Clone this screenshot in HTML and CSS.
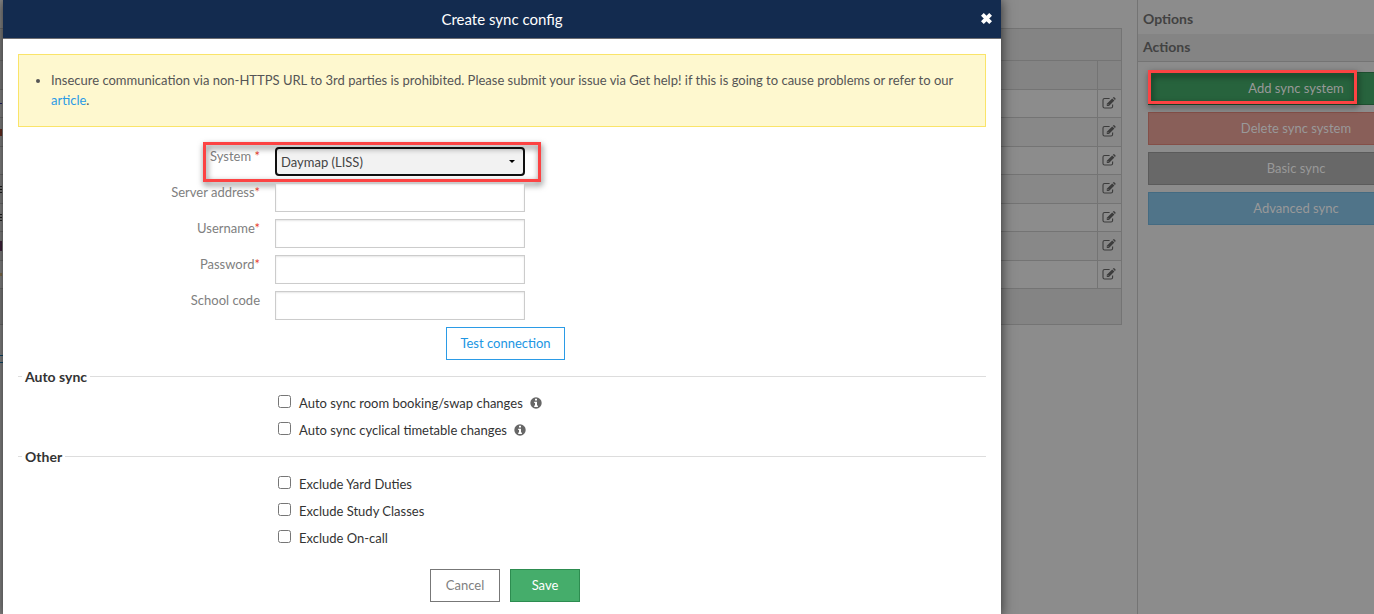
FILE: index.html
```html
<!DOCTYPE html>
<html lang="en">
<head>
<meta charset="utf-8">
<title>Create sync config</title>
<link rel="stylesheet" href="styles.css">
</head>
<body>
<svg class="symbols" aria-hidden="true">
  <symbol id="edit" viewBox="0 0 14 12">
    <path d="M7.600 1.500H2.600Q1 1.500 1 3.100V9.400Q1 11 2.600 11H9Q10.600 11 10.600 9.400V7.600" fill="none" stroke="currentColor" stroke-width="1.100"/>
    <path d="M4.800 8.900V6.700L10.200 1.400L12.400 3.600L7 8.900ZM10.800 .8L11.500 .2Q11.900-.1 12.300 .3L13.500 1.500Q13.900 1.900 13.500 2.300L12.900 2.900Z" fill="currentColor"/>
    <path d="M5.700 7.200L6.600 8.100" stroke="#8c8c8c" stroke-width=".8"/>
  </symbol>
  <symbol id="info" viewBox="0 0 12 12">
    <circle cx="6" cy="6" r="5.700" fill="currentColor"/>
    <path d="M5 1.800H7V3.500H5ZM4.200 4.700H7V8.500H7.900V9.900H4.200V8.500H5V6H4.200Z" fill="#fff"/>
  </symbol>
</svg>
<div class="page">
  <main class="content">
    <table class="systems">
      <thead>
        <tr class="caption-row"><th colspan="2"></th></tr>
        <tr><th></th><th class="tool"></th></tr>
      </thead>
      <tbody>
        <tr><td><i class="mark blue"></i></td><td class="tool"><button aria-label="Edit"><svg><use href="#edit"/></svg></button></td></tr>
        <tr><td><i class="mark red"></i></td><td class="tool"><button aria-label="Edit"><svg><use href="#edit"/></svg></button></td></tr>
        <tr><td></td><td class="tool"><button aria-label="Edit"><svg><use href="#edit"/></svg></button></td></tr>
        <tr><td><i class="mark lines"></i></td><td class="tool"><button aria-label="Edit"><svg><use href="#edit"/></svg></button></td></tr>
        <tr><td><i class="mark lines"></i></td><td class="tool"><button aria-label="Edit"><svg><use href="#edit"/></svg></button></td></tr>
        <tr><td><i class="mark purple"></i></td><td class="tool"><button aria-label="Edit"><svg><use href="#edit"/></svg></button></td></tr>
        <tr><td><i class="mark tan"></i></td><td class="tool"><button aria-label="Edit"><svg><use href="#edit"/></svg></button></td></tr>
      </tbody>
      <tfoot><tr><td colspan="2"></td></tr></tfoot>
    </table>
    <div class="edge-button"></div>
  </main>
  <aside class="options">
    <h2>Options</h2>
    <h3>Actions</h3>
    <div class="actions">
      <button class="act add">Add sync system</button>
      <button class="act delete">Delete sync system</button>
      <button class="act basic">Basic sync</button>
      <button class="act advanced">Advanced sync</button>
      <span class="callout callout-add"></span>
    </div>
  </aside>
</div>

<section class="modal" role="dialog" aria-labelledby="title">
  <header class="modal-head">
    <h1 id="title">Create sync config</h1>
    <button class="close" aria-label="Close"><svg viewBox="0 0 12 12"><path d="M2.200 2.200L9.800 9.800M9.800 2.200L2.200 9.800" stroke="#fff" stroke-width="3.600"/></svg></button>
  </header>
  <form class="modal-body">
    <ul class="alert">
      <li>Insecure communication via non-HTTPS URL to 3rd parties is prohibited. Please submit your issue via Get help! if this is going to cause problems or refer to our <a href="#">article</a>.</li>
    </ul>
    <div class="fields">
      <div class="field">
        <label for="system">System <b>*</b></label>
        <select id="system"><option>Daymap (LISS)</option></select>
        <span class="callout callout-system"></span>
      </div>
      <div class="field"><label for="server">Server address<b>*</b></label><input type="text" id="server"></div>
      <div class="field"><label for="user">Username<b>*</b></label><input type="text" id="user"></div>
      <div class="field"><label for="pass">Password<b>*</b></label><input type="password" id="pass"></div>
      <div class="field"><label for="code">School code</label><input type="text" id="code"></div>
      <div class="test"><button type="button" class="btn outline-blue">Test connection</button></div>
    </div>
    <fieldset>
      <legend>Auto sync</legend>
      <label class="check"><input type="checkbox"><span>Auto sync room booking/swap changes</span><svg><use href="#info"/></svg></label>
      <label class="check"><input type="checkbox"><span>Auto sync cyclical timetable changes</span><svg><use href="#info"/></svg></label>
    </fieldset>
    <fieldset>
      <legend>Other</legend>
      <label class="check"><input type="checkbox"><span>Exclude Yard Duties</span></label>
      <label class="check"><input type="checkbox"><span>Exclude Study Classes</span></label>
      <label class="check"><input type="checkbox"><span>Exclude On-call</span></label>
    </fieldset>
    <footer class="buttons">
      <button type="button" class="btn outline-gray">Cancel</button>
      <button type="button" class="btn save">Save</button>
    </footer>
  </form>
</section>
</body>
</html>
```

FILE: styles.css
```css
* { box-sizing: border-box; }
html, body { height: 100%; }
body {
  margin: 0;
  overflow: hidden;
  position: relative;
  background: #8c8c8c;
  color: #333;
  font: 13px/20px Lato, "Liberation Sans", sans-serif;
}
button, input, select { font: inherit; margin: 0; }
h1, h2, h3, ul { margin: 0; padding: 0; }
.symbols { display: none; }

/* Page behind the dialog */
.page { display: flex; min-height: 100%; }
.content { flex: 1; padding: 28px 15px 0 0; }
.systems { width: 100%; border-collapse: collapse; }
.systems th, .systems td { height: 28px; padding: 0; border: 1px solid #747474; border-left: 0; }
.systems tbody tr:nth-child(even) td, .systems thead tr + tr th { height: 29px; }
.systems .caption-row th { height: 32px; }
.systems th, .systems tfoot td { background: #848484; }
.systems tbody tr:nth-child(even) { background: #888; }
.systems tfoot td { height: 36px; }
.systems .tool { width: 24px; border-left: 1px solid #747474; }
.tool button { display: block; width: 100%; padding: 0 0 2px 4px; border: 0; background: none; color: #3c3c3c; }
.tool svg { display: block; width: 14px; height: 12px; overflow: visible; }
.mark { display: block; width: 2px; height: 7px; }
.blue { height: 1px; background: #22226a; }
.red { background: #6b3023; }
.lines { background: repeating-linear-gradient(#222 0 1px, #808080 1px 3px); }
.purple { height: 10px; background: #442440; }
.tan { height: 3px; background: #8b7650; }
.edge-button { width: 3px; height: 8px; margin-top: 30px; border: solid #0e4e72; border-width: 1px 0; }

.options { flex: none; width: 237px; overflow: hidden; border-left: 1px solid #747474; }
.options h2, .options h3 { padding-left: 5px; color: #424242; font-size: 14px; font-weight: 700; }
.options h2 { padding-top: 9px; padding-bottom: 5px; }
.options h3 { padding-top: 3px; padding-bottom: 4px; background: #848484; border-bottom: 1px solid #747474; }
.actions { position: relative; display: grid; gap: 7px; width: 306px; padding: 10px 0 0 10px; }
.act { height: 33px; padding: 0 0 1px; border: 1px solid; color: #999; }
.add { background: #27633d; border-color: #1e4e2f; }
.delete { background: #895f59; border-color: #844f48; }
.basic { background: #686868; border-color: #5b5b5b; }
.advanced { background: #507489; border-color: #446b82; }

/* Red highlight frames */
.callout {
  position: absolute;
  border: 3px solid #fc4343;
  filter: drop-shadow(1px 3px 3px rgba(0, 0, 0, .6));
  pointer-events: none;
}
.callout-add { left: 10px; top: 8px; width: 209px; height: 34px; }
.callout-system { left: calc(25% - 57px); top: -5px; width: 338px; height: 40px; }

/* Dialog */
.modal {
  position: absolute;
  top: 0;
  left: 3px;
  right: 373px;
  min-height: 100%;
  background: #fff;
  box-shadow: 0 0 12px rgba(0, 0, 0, .7);
}
.modal-head {
  display: grid;
  grid-template-columns: 1fr auto 1fr;
  align-items: center;
  height: 39px;
  padding: 0 8px 1px;
  background: #132b4f;
  border-bottom: 1px solid #6e6e72;
  color: #fff;
}
.modal-head h1 { grid-column: 2; font-size: 15px; line-height: 20px; font-weight: 400; }
.close { justify-self: end; padding: 0; border: 0; background: none; }
.close svg { display: block; width: 13px; height: 13px; }
.modal-body { padding: 15px; }
.alert { padding: 15px 15px 16px 32px; background: #fef8cf; border: 1px solid #fae469; color: #555; }
.alert a { color: #2b9be6; text-decoration: none; }

.fields { display: grid; gap: 7px; padding: 20px 0 7px; }
.field { position: relative; display: grid; grid-template-columns: 25% 250px; column-gap: 15px; align-items: start; }
.field label { color: #808080; line-height: 18px; text-align: right; }
.field b { color: #e83e2c; font-weight: 400; }
.field input { height: 29px; border: 1px solid #ccc; box-shadow: inset 0 1px 2px rgba(0, 0, 0, .1); }
.field select {
  height: 29px;
  padding: 0 4px;
  border: 2px solid #101010;
  border-radius: 4px;
  color: #444;
  appearance: none;
  background: #f2f2f2 url("data:image/svg+xml,%3Csvg xmlns='http://www.w3.org/2000/svg' viewBox='0 0 6 3'%3E%3Cpath d='M0 0H6L3 3Z'/%3E%3C/svg%3E") no-repeat right 8px center / 6px 3px;
}
.btn { height: 33px; padding: 0 0 1px; border: 1px solid; background: #fff; }
.outline-blue { width: 119px; color: #2196e3; border-color: #2b9be6; }
.test { padding-left: calc(25% + 186px); }

fieldset { margin: 0; padding: 3px 4px 4px; border: 0; border-top: 1px solid #ddd; }
fieldset + fieldset { padding-top: 4px; }
legend { padding: 0 3px; font-size: 14px; line-height: 19px; font-weight: 700; }
.check { display: flex; align-items: center; width: max-content; height: 27px; padding-left: 256px; }
.check input { width: 13px; height: 13px; margin: 0 8px 3px 0; }
.check svg { width: 12px; height: 12px; margin-left: 7px; color: #666; }
.buttons { display: flex; justify-content: center; gap: 10px; padding-top: 14px; padding-left: 6px; }
.buttons .btn { width: 70px; }
.outline-gray { color: #808080; border-color: #777; }
.save { color: #fff; background: #45ad6b; border-color: #2d8c50; }
```
